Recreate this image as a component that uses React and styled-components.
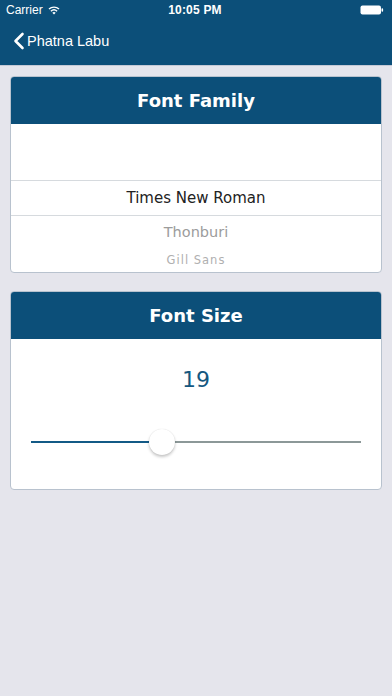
import React, { useState } from 'react';
import styled, { createGlobalStyle } from 'styled-components';

const BLUE = '#0c4f79';

const GlobalStyle = createGlobalStyle`
  html, body {
    margin: 0;
    padding: 0;
    background: #e5e5ec;
  }
  * {
    box-sizing: border-box;
  }
`;

const Page = styled.div`
  width: 392px;
  min-height: 696px;
  background: #e5e5ec;
  font-family: 'DejaVu Sans', Verdana, sans-serif;
`;

const TopBar = styled.header`
  background: ${BLUE};
  border-bottom: 1px solid #c4c9d6;
  color: #fff;
`;

const StatusBar = styled.div`
  height: 20px;
  display: grid;
  grid-template-columns: 1fr auto 1fr;
  align-items: center;
  padding: 0 8px 0 6px;
  font-family: 'Liberation Sans', Arial, sans-serif;
  font-size: 12px;
`;

const Carrier = styled.div`
  display: flex;
  align-items: center;
  gap: 5px;
`;

const Clock = styled.div`
  font-weight: 700;
  letter-spacing: 0.2px;
`;

const Battery = styled.div`
  justify-self: end;
  display: flex;
  align-items: center;
`;

const NavBar = styled.div`
  height: 45px;
  display: flex;
  align-items: center;
  padding: 0 0 4px 13px;
  gap: 2px;
  font-family: 'Liberation Sans', Arial, sans-serif;
  font-size: 14.5px;
`;

const Content = styled.main`
  padding: 10px 10px;
  display: flex;
  flex-direction: column;
  gap: 18px;
`;

const Card = styled.section`
  background: #fff;
  border: 1px solid #b8c2ce;
  border-radius: 4px;
  overflow: hidden;
`;

const CardHeader = styled.h2`
  margin: 0;
  height: 47px;
  background: ${BLUE};
  color: #fff;
  font-size: 18px;
  font-weight: 700;
  display: flex;
  align-items: center;
  justify-content: center;
`;

const Picker = styled.div`
  display: flex;
  flex-direction: column;
  height: 148px;
`;

const PickerRow = styled.div`
  height: ${(p) => p.h}px;
  flex-shrink: 0;
  display: flex;
  align-items: center;
  justify-content: center;
  color: ${(p) => p.color || '#222'};
  font-size: ${(p) => p.size || 15}px;
  border-bottom: ${(p) => (p.line ? '1px solid #d6dade' : 'none')};
  letter-spacing: ${(p) => p.spacing || 0}px;
`;

const SizeBody = styled.div`
  height: 150px;
  display: flex;
  flex-direction: column;
  align-items: center;
  padding-top: 27px;
`;

const SizeValue = styled.div`
  color: #15577f;
  font-size: 22px;
  line-height: 28px;
`;

const SliderWrap = styled.div`
  position: relative;
  width: 330px;
  height: 30px;
  margin-top: 33px;
  display: flex;
  align-items: center;
`;

const Track = styled.div`
  height: 2px;
  background: ${(p) => p.color};
  flex: ${(p) => p.grow};
`;

const Thumb = styled.div`
  position: absolute;
  top: 2px;
  width: 26px;
  height: 26px;
  margin-left: -13px;
  border-radius: 50%;
  background: #fff;
  box-shadow: 0 2px 3px rgba(0, 0, 0, 0.22), 0 0 1px rgba(0, 0, 0, 0.15);
`;

const Wifi = () => (
  <svg width="12" height="9" viewBox="0 0 12 9">
    <path d="M6 8.6 L4.3 6.7 A2.5 2.5 0 0 1 7.7 6.7 Z" fill="#fff" />
    <path d="M2.9 5.2 A4.6 4.6 0 0 1 9.1 5.2" stroke="#fff" strokeWidth="1.4" fill="none" />
    <path d="M1 3.1 A7.3 7.3 0 0 1 11 3.1" stroke="#fff" strokeWidth="1.4" fill="none" />
  </svg>
);

const BatteryIcon = () => (
  <svg width="24" height="10" viewBox="0 0 24 10">
    <rect x="0.5" y="0.5" width="20.5" height="9" rx="2" fill="#fff" />
    <rect x="21.5" y="3.2" width="1.6" height="3.6" rx="0.8" fill="#fff" />
  </svg>
);

const Chevron = () => (
  <svg width="12" height="18" viewBox="0 0 12 18">
    <path d="M9.5 2 L2.5 9 L9.5 16" stroke="#fff" strokeWidth="2.6" fill="none" strokeLinecap="round" strokeLinejoin="round" />
  </svg>
);

export default function App() {
  const [size] = useState(19);
  const ratio = 0.397;

  return (
    <Page>
      <GlobalStyle />
      <TopBar>
        <StatusBar>
          <Carrier>
            Carrier <Wifi />
          </Carrier>
          <Clock>10:05 PM</Clock>
          <Battery>
            <BatteryIcon />
          </Battery>
        </StatusBar>
        <NavBar>
          <Chevron />
          Phatna Labu
        </NavBar>
      </TopBar>

      <Content>
        <Card>
          <CardHeader>Font Family</CardHeader>
          <Picker>
            <PickerRow h={57} line />
            <PickerRow h={35} line>Times New Roman</PickerRow>
            <PickerRow h={31} color="#9c9c9c" size={14.5}>Thonburi</PickerRow>
            <PickerRow h={25} color="#b0b0b0" size={11.5} spacing={1}>Gill Sans</PickerRow>
          </Picker>
        </Card>

        <Card>
          <CardHeader>Font Size</CardHeader>
          <SizeBody>
            <SizeValue>{size}</SizeValue>
            <SliderWrap>
              <Track color="#135a86" grow={ratio} />
              <Track color="#8c9898" grow={1 - ratio} />
              <Thumb style={{ left: `${ratio * 100}%` }} />
            </SliderWrap>
          </SizeBody>
        </Card>
      </Content>
    </Page>
  );
}
